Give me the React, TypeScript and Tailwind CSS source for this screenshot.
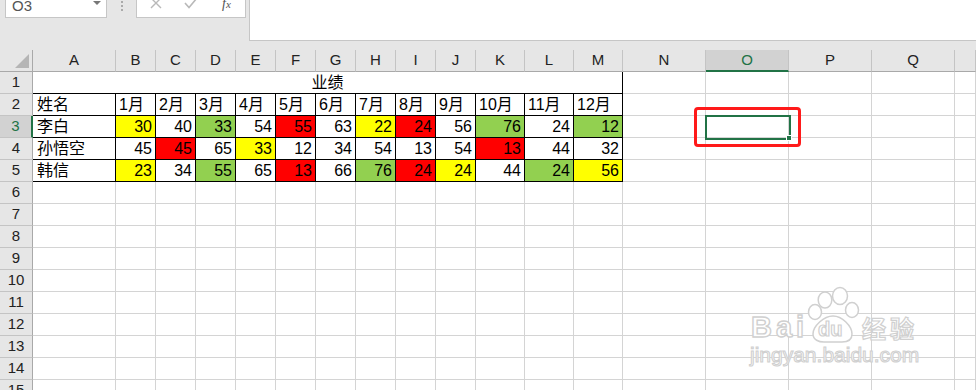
import React from "react";

type V = [number | string, ("y" | "r" | "g")?];

const dataRows: { name: string; vals: V[] }[] = [
  {
    name: "李白",
    vals: [[30, "y"], [40], [33, "g"], [54], [55, "r"], [63], [22, "y"], [24, "r"], [56], [76, "g"], [24], [12, "g"]],
  },
  {
    name: "孙悟空",
    vals: [[45], [45, "r"], [65], [33, "y"], [12], [34], [54], [13], [54], [13, "r"], [44], [32]],
  },
  {
    name: "韩信",
    vals: [[23, "y"], [34], [55, "g"], [65], [13, "r"], [66], [76, "g"], [24, "r"], [24, "y"], [44], [24, "g"], [56, "y"]],
  },
];

const colLetters = ["A", "B", "C", "D", "E", "F", "G", "H", "I", "J", "K", "L", "M", "N", "O", "P", "Q", ""];

const fillClass = (c?: "y" | "r" | "g") =>
  c === "y" ? "bg-[#ffff00]" : c === "r" ? "bg-[#ff0000]" : c === "g" ? "bg-[#92d050]" : "bg-white";

const GRID = "border-r border-b border-[#d4d4d4] bg-white";
const BLACK = "border-r border-b border-black";

function RowHeader({ n, selected }: { n: number; selected?: boolean }) {
  return (
    <div
      className={
        "flex items-center justify-center border-b border-[#c4c4c4] text-[15px] " +
        (selected
          ? "bg-[#d2d2d2] border-r-2 border-r-[#217346] text-[#217346]"
          : "bg-[#e6e6e6] border-r border-r-[#a9a9a9] text-[#222]")
      }
    >
      {n}
    </div>
  );
}

function EmptyCells({ from }: { from: number }) {
  const cells = [];
  for (let i = from; i < 18; i++) cells.push(<div key={i} className={GRID} />);
  return <>{cells}</>;
}

export default function App() {
  const rows: React.ReactNode[] = [];

  rows.push(
    <React.Fragment key="r1">
      <RowHeader n={1} />
      <div className={"col-span-13 flex items-end justify-center bg-white text-[16px] leading-[16px] pb-[2px] " + BLACK}>
        业绩
      </div>
      <EmptyCells from={13} />
    </React.Fragment>
  );

  rows.push(
    <React.Fragment key="r2">
      <RowHeader n={2} />
      <div className={"flex items-end pl-[4px] bg-white text-[16px] leading-[16px] pb-[2px] " + BLACK}>姓名</div>
      {Array.from({ length: 12 }, (_, i) => (
        <div key={i} className={"flex items-end pl-[3px] bg-white text-[16px] leading-[16px] pb-[2px] " + BLACK}>
          {i + 1}月
        </div>
      ))}
      <EmptyCells from={13} />
    </React.Fragment>
  );

  dataRows.forEach((r, ri) => {
    rows.push(
      <React.Fragment key={"d" + ri}>
        <RowHeader n={ri + 3} selected={ri === 0} />
        <div className={"flex items-end pl-[4px] bg-white text-[16px] leading-[16px] pb-[2px] " + BLACK}>{r.name}</div>
        {r.vals.map((v, i) => (
          <div
            key={i}
            className={
              "flex items-end justify-end pr-[3px] text-[16px] leading-[16px] pb-[2px] " + fillClass(v[1]) + " " + BLACK
            }
          >
            {v[0]}
          </div>
        ))}
        <EmptyCells from={13} />
      </React.Fragment>
    );
  });

  for (let n = 6; n <= 16; n++) {
    rows.push(
      <React.Fragment key={"e" + n}>
        <RowHeader n={n} />
        <EmptyCells from={0} />
      </React.Fragment>
    );
  }

  return (
    <div className="relative w-[976px] h-[390px] overflow-hidden bg-[#e6e6e6] font-['Liberation_Sans','Noto_Sans_CJK_SC',sans-serif] text-black">
      {/* Formula bar area */}
      <div className="flex h-[50px] items-start">
        <div className="ml-[5px] mt-[-7px] flex h-[25px] w-[102px] items-center justify-between border border-[#c6c6c6] bg-white pl-[6px] pr-[5px]">
          <span className="text-[15px] leading-[15px] text-[#555] mt-[-1px]">O3</span>
          <svg width="8" height="5" viewBox="0 0 8 5" className="mt-[-4px]">
            <path d="M0 0 L8 0 L4 4 Z" fill="#777" />
          </svg>
        </div>
        <div className="ml-[14px] mt-[1px] flex flex-col gap-[2px]">
          <div className="h-[2px] w-[2px] bg-[#aaa]" />
          <div className="h-[2px] w-[2px] bg-[#aaa]" />
          <div className="h-[2px] w-[2px] bg-[#aaa]" />
        </div>
        <div className="ml-[13px] mt-[-7px] flex h-[25px] w-[110px] items-center border border-[#c6c6c6] bg-white">
          <svg width="12" height="12" viewBox="0 0 12 12" className="ml-[13px] mt-[-6px]">
            <path d="M1 1 L11 11 M11 1 L1 11" stroke="#b9b9b9" strokeWidth="1.4" fill="none" />
          </svg>
          <svg width="14" height="12" viewBox="0 0 14 12" className="ml-[22px] mt-[-5px]">
            <path d="M1 6 L5 10.5 L13 1" stroke="#b9b9b9" strokeWidth="1.6" fill="none" />
          </svg>
          <span className="ml-[24px] mt-[-3px] font-['Liberation_Serif',serif] italic text-[14px] leading-[14px] text-[#555]">
            f<span className="text-[11px]">x</span>
          </span>
        </div>
        <div className="ml-[3px] h-[41px] flex-1 border-l border-b border-[#c6c6c6] bg-white" />
      </div>

      {/* Sheet grid */}
      <div className="grid grid-cols-[33px_83px_repeat(9,40px)_49px_49px_49px_83px_83px_83px_83px_1fr] auto-rows-[22px]">
        <div className="relative border-r border-b border-[#a9a9a9] bg-[#e6e6e6]">
          <svg width="14" height="14" viewBox="0 0 14 14" className="absolute right-[3px] bottom-[3px]">
            <path d="M14 0 L14 14 L0 14 Z" fill="#b5b5b5" />
          </svg>
        </div>
        {colLetters.map((l, i) =>
          l === "O" ? (
            <div
              key={i}
              className="flex items-center justify-center border-r border-[#c4c4c4] border-b-2 border-b-[#217346] bg-[#d2d2d2] text-[15px] text-[#217346]"
            >
              {l}
            </div>
          ) : (
            <div
              key={i}
              className="flex items-center justify-center border-r border-[#c4c4c4] border-b border-b-[#a9a9a9] bg-[#e6e6e6] text-[15px] text-[#222]"
            >
              {l}
            </div>
          )
        )}
        {rows}
      </div>

      {/* Selection on O3 */}
      <div className="absolute left-[705px] top-[115px] h-[25px] w-[86px] border-2 border-[#217346]" />
      <div className="absolute left-[786px] top-[135px] h-[6px] w-[6px] border border-white bg-[#217346]" />

      {/* Red annotation box */}
      <div className="absolute left-[694px] top-[107px] h-[40px] w-[107px] rounded-[4px] border-[3px] border-[#ff1a1a]" />

      {/* Watermark */}
      <div className="pointer-events-none absolute left-[750px] top-[284px] h-[84px] w-[180px]">
        <span className="absolute left-[1px] top-[26px] font-bold text-[29px] leading-[34px] tracking-[4px] text-white [-webkit-text-stroke:1.4px_#d0d0d0]">
          Bai
        </span>
        <svg width="60" height="60" viewBox="0 0 60 60" className="absolute left-[55px] top-[1px]">
          <g fill="#fff" stroke="#d0d0d0" strokeWidth="1.5">
            <ellipse cx="10" cy="27" rx="6.5" ry="7.5" />
            <ellipse cx="20" cy="15" rx="6.8" ry="8" />
            <ellipse cx="35" cy="11" rx="7.5" ry="8.5" />
            <ellipse cx="47" cy="25" rx="6.5" ry="7.5" />
            <path d="M28 31 C37 31 47 41 47 49 C47 55 42 57 37 57 L19 57 C14 57 8 55 8 49 C8 41 19 31 28 31 Z" />
          </g>
        </svg>
        <span className="absolute left-[68px] top-[35px] font-bold text-[20px] leading-[20px] text-white [-webkit-text-stroke:1.2px_#d0d0d0]">
          du
        </span>
        <span className="absolute left-[112px] top-[30px] font-['Noto_Sans_CJK_SC',sans-serif] font-bold text-[24px] leading-[28px] tracking-[4px] text-white [-webkit-text-stroke:1.2px_#d0d0d0]">
          经验
        </span>
        <span className="absolute left-[0px] top-[59px] text-[21px] leading-[24px] text-white [-webkit-text-stroke:1.1px_#d0d0d0]">
          jingyan.baidu.com
        </span>
      </div>
    </div>
  );
}
